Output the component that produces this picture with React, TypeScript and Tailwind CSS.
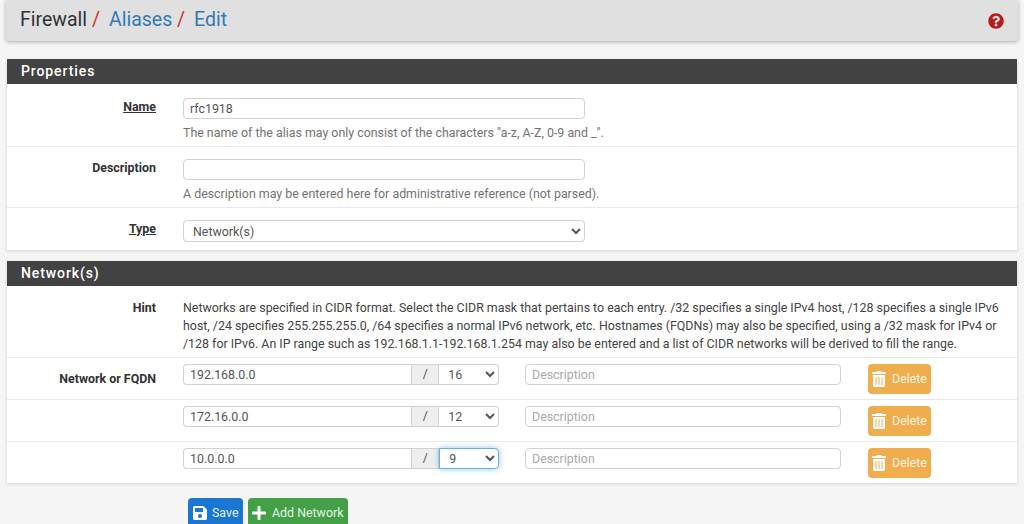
import { FaQuestionCircle, FaSave, FaPlus, FaTrashAlt } from 'react-icons/fa';

const inputClass = 'block h-[21px] rounded-[4px] border border-[#d2d2d2] bg-white px-[6px] text-[12.4px] text-[#555] outline-none placeholder:text-[#aaa]';

function FormRow({ label, underline, help, children, className }: { label: string; underline?: boolean; help?: string; children: React.ReactNode; className?: string }) {
  return (
    <div className={`flex border-b border-[#e8e8e8] last:border-b-0 ${className}`}>
      <div className="w-[149px] shrink-0 text-right text-[12.4px] leading-[17px] font-bold text-[#333]">
        <span className={underline ? 'underline' : ''}>{label}</span>
      </div>
      <div className="ml-[27px] w-[402px] shrink-0">
        {children}
        {help && <p className="mt-[5px] text-[12.4px] leading-[17px] whitespace-nowrap text-[#737373]">{help}</p>}
      </div>
    </div>
  );
}

function NetworkRow({ label, ip, mask, focused }: { label?: string; ip: string; mask: string; focused?: boolean }) {
  return (
    <div className="flex h-[42px] border-t border-[#e8e8e8] pt-[6px]">
      <div className="w-[149px] shrink-0 pt-[6px] text-right text-[12.4px] leading-[17px] font-bold text-[#333]">{label}</div>
      <div className="ml-[27px] flex h-[21px] w-[316px] shrink-0">
        <input readOnly value={ip} className={`${inputClass} w-[229px] rounded-r-none border-r-0`} />
        <span className="flex w-[28px] items-center justify-center border border-[#d2d2d2] bg-[#eee] text-[12.4px] text-[#555]">/</span>
        <select
          defaultValue={mask}
          className={`h-[21px] w-[60px] rounded-r-[4px] border bg-white pl-[5px] text-[12.4px] text-[#555] outline-none ${focused ? 'border-[#66afe9] shadow-[0_0_6px_rgba(102,175,233,0.7)]' : 'border-[#d2d2d2] border-l-0'}`}
        >
          <option>{mask}</option>
        </select>
      </div>
      <input placeholder="Description" className={`${inputClass} ml-[26px] w-[316px]`} />
      <button className="ml-[27px] flex h-[30px] w-[63px] items-center gap-[5px] rounded-[4px] bg-[#f0ad4e] pl-[3px] text-[12.4px] text-[#fff3e2]">
        <FaTrashAlt className="text-[16px] text-white" />
        Delete
      </button>
    </div>
  );
}

export default function App() {
  return (
    <div className="h-[524px] overflow-hidden bg-[#f5f5f5] font-['Roboto',sans-serif]">
      <div className="mx-[6px] flex h-[41px] items-center justify-between bg-[#e0e0e0] pr-[14px] pl-[14px] shadow-[0_1px_4px_rgba(0,0,0,0.3)]">
        <h1 className="pb-[1px] text-[19.5px] font-normal text-[#333]">
          Firewall <span className="text-[#c9302c]">/</span>
          <a className="ml-[9px] text-[#337ab7]">Aliases</a> <span className="text-[#c9302c]">/</span>
          <a className="ml-[9px] text-[#337ab7]">Edit</a>
        </h1>
        <FaQuestionCircle className="text-[16px] text-[#b71c1c]" />
      </div>

      <section className="mx-[7px] mt-[18px] bg-white shadow-[0_1px_3px_rgba(0,0,0,0.15)]">
        <h2 className="flex h-[25px] items-center bg-[#424242] pl-[14px] text-[14px] font-medium tracking-[0.9px] text-white">Properties</h2>
        <FormRow label="Name" underline help={'The name of the alias may only consist of the characters "a-z, A-Z, 0-9 and _".'} className="h-[63px] pt-[14px]">
          <input readOnly value="rfc1918" className={`${inputClass} w-full`} />
        </FormRow>
        <FormRow label="Description" help="A description may be entered here for administrative reference (not parsed)." className="h-[61px] pt-[12px]">
          <input className={`${inputClass} w-full`} />
        </FormRow>
        <FormRow label="Type" underline className="h-[42px] pt-[12px]">
          <select defaultValue="Network(s)" className="block h-[22px] w-full rounded-[4px] border border-[#d2d2d2] bg-white pl-[5px] text-[12.4px] text-[#555] outline-none">
            <option>Network(s)</option>
          </select>
        </FormRow>
      </section>

      <section className="mx-[7px] mt-[11px] bg-white shadow-[0_1px_3px_rgba(0,0,0,0.15)]">
        <h2 className="flex h-[25px] items-center bg-[#424242] pl-[14px] text-[14px] font-medium tracking-[0.9px] text-white">Network(s)</h2>
        <div className="flex h-[71px] pt-[13px]">
          <div className="w-[149px] shrink-0 text-right text-[12.4px] leading-[18px] font-bold text-[#333]">Hint</div>
          <p className="ml-[27px] w-[826px] text-[12.4px] leading-[17.8px] text-[#444]">
            Networks are specified in CIDR format. Select the CIDR mask that pertains to each entry. /32 specifies a single IPv4 host, /128 specifies a single IPv6 host, /24 specifies 255.255.255.0, /64 specifies a normal IPv6 network, etc. Hostnames (FQDNs) may also be specified, using a /32 mask for IPv4 or /128 for IPv6. An IP range such as 192.168.1.1-192.168.1.254 may also be entered and a list of CIDR networks will be derived to fill the range.
          </p>
        </div>
        <NetworkRow label="Network or FQDN" ip="192.168.0.0" mask="16" />
        <NetworkRow ip="172.16.0.0" mask="12" />
        <NetworkRow ip="10.0.0.0" mask="9" focused />
      </section>

      <div className="mt-[15px] ml-[188px] flex gap-[5px]">
        <button className="flex h-[30px] w-[55px] items-center gap-[4px] rounded-[4px] bg-[#1976d2] pl-[4px] text-[12.4px] text-[#e3f0fb]">
          <FaSave className="text-[16px] text-white" />
          Save
        </button>
        <button className="flex h-[30px] w-[100px] items-center gap-[5px] rounded-[4px] bg-[#43a047] pl-[3px] text-[12.4px] text-[#e4f3e5]">
          <FaPlus className="text-[16px] text-white" />
          Add Network
        </button>
      </div>
    </div>
  );
}
